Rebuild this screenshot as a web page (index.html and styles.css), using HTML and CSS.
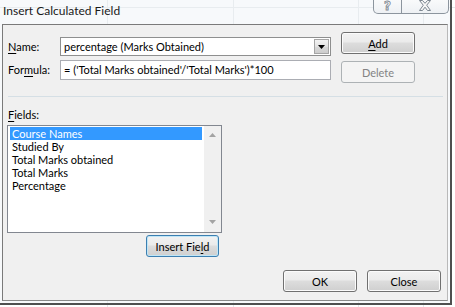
FILE: index.html
```html
<!DOCTYPE html>
<html lang="en">
<head>
    <meta charset="UTF-8">
    <title>Insert Calculated Field</title>
    <link rel="stylesheet" href="styles.css">
</head>
<body>

<div class="window">
    <div class="titlebar">
        <span class="title">Insert Calculated Field</span>
        <div class="caption">
            <span class="cap-btn cap-help">?</span>
            <span class="cap-btn cap-close">
                <svg width="14" height="11" viewBox="0 0 14 11">
                    <path d="M1.5 0.5 L4.5 0.5 L7 3.3 L9.5 0.5 L12.5 0.5 L8.7 5.2 L12.5 10.5 L9.5 10.5 L7 7.2 L4.5 10.5 L1.5 10.5 L5.3 5.2 Z" fill="#f7f7f7" stroke="#7d8791" stroke-width="1"/>
                </svg>
            </span>
        </div>
    </div>

    <div class="client">
        <div class="top">
            <div class="form">
                <div class="row">
                    <label class="lbl"><u>N</u>ame:</label>
                    <div class="combo">
                        <span class="value">percentage (Marks Obtained)</span>
                        <span class="drop">
                            <svg width="7" height="4" viewBox="0 0 7 4"><path d="M0 0 L7 0 L3.5 4 Z" fill="#000"/></svg>
                        </span>
                    </div>
                </div>
                <div class="row">
                    <label class="lbl">For<u>m</u>ula:</label>
                    <div class="textbox">= ('Total Marks obtained'/'Total Marks')*100</div>
                </div>
            </div>
            <div class="side">
                <button class="btn"><u>A</u>dd</button>
                <button class="btn" disabled>Delete</button>
            </div>
        </div>

        <div class="sep"></div>

        <div class="lbl fields-lbl"><u>F</u>ields:</div>
        <div class="listbox">
            <ul class="items">
                <li class="selected">Course Names</li>
                <li>Studied By</li>
                <li>Total Marks obtained</li>
                <li>Total Marks</li>
                <li>Percentage</li>
            </ul>
            <div class="scroll">
                <svg width="7" height="4" viewBox="0 0 7 4"><path d="M0 4 L7 4 L3.5 0 Z" fill="#a3a3a3"/></svg>
                <svg width="7" height="4" viewBox="0 0 7 4"><path d="M0 0 L7 0 L3.5 4 Z" fill="#a3a3a3"/></svg>
            </div>
        </div>
        <button class="btn focus insert">Insert Fie<u>l</u>d</button>

        <div class="actions">
            <button class="btn">OK</button>
            <button class="btn">Close</button>
        </div>
    </div>
</div>

</body>
</html>
```

FILE: styles.css
```css
/* Fondo: hoja de cálculo detrás del cuadro de diálogo */
body {
    margin: 0;
    width: 455px;
    height: 307px;
    overflow: hidden;
    font-family: "Segoe UI", Lato, "Noto Sans", sans-serif;
    font-size: 12px;
    color: #000;
    background-color: #ffffff;
    background-image:
        linear-gradient(#e4e7ea, #e4e7ea),
        linear-gradient(#e4e7ea, #e4e7ea),
        linear-gradient(#e4e7ea, #e4e7ea),
        linear-gradient(#e4e7ea, #e4e7ea),
        linear-gradient(#e4e7ea, #e4e7ea);
    background-size: 1px 100%, 1px 100%, 1px 100%, 1px 100%, 100% 1px;
    background-position: 107px 0, 233px 0, 358px 0, 423px 0, 0 7px;
    background-repeat: no-repeat;
}

.window {
    width: 450px;
    background: rgba(238, 242, 246, 0.45);
    border-right: 2px solid #4f4f4f;
    border-bottom: 2px solid #4f4f4f;
    padding-bottom: 2px;
}

/* Barra de título */
.titlebar {
    height: 24px;
    display: flex;
    justify-content: space-between;
    align-items: flex-start;
}
.title {
    padding: 3px 0 0 3px;
    line-height: 16px;
    color: #1a1a1a;
}
.caption {
    display: flex;
    margin-right: 1px;
    border: 1px solid #8c959e;
    border-top: none;
    border-radius: 0 0 5px 5px;
    background: linear-gradient(#f9fafb, #eef1f4);
    overflow: hidden;
}
.cap-btn {
    height: 13px;
    display: flex;
    justify-content: center;
    align-items: flex-start;
}
.cap-help {
    width: 27px;
    border-right: 1px solid #8c959e;
    font-family: "DejaVu Sans", sans-serif;
    font-weight: bold;
    font-size: 12px;
    line-height: 12px;
    color: #fafafa;
    -webkit-text-stroke: 0.8px #7d8791;
}
.cap-close {
    width: 46px;
}

/* Área del cliente */
.client {
    margin-left: 2px;
    width: 439px;
    height: 268px;
    border: 1px solid #7a7a7a;
    border-right-color: #b9b9b9;
    border-bottom-color: #8a8a8a;
    background: #f0f0f0;
    padding: 7px 0 0 5px;
    font-size: 11px;
}

.top {
    display: flex;
}
.form {
    margin-top: 5px;
    display: flex;
    flex-direction: column;
    gap: 4px;
}
.row {
    display: flex;
    align-items: center;
}
.lbl {
    width: 52px;
    line-height: 16px;
}
.lbl u,
.btn u {
    text-decoration-thickness: 1px;
    text-underline-offset: 2px;
}
.combo,
.textbox {
    width: 266px;
    border: 1px solid #abadb3;
    background: #fff;
    padding-left: 3px;
    white-space: nowrap;
    overflow: hidden;
}
.combo {
    height: 17px;
    line-height: 17px;
    display: flex;
    justify-content: space-between;
    border-color: #8e8f8f;
}
.textbox {
    height: 18px;
    line-height: 18px;
}
.drop {
    width: 13px;
    height: 13px;
    margin: 1px 1px 0 0;
    border: 1px solid #a5a5a5;
    background: linear-gradient(#f3f3f3, #e2e2e2 50%, #d8d8d8 51%, #cdcdcd);
    display: flex;
    justify-content: center;
    align-items: center;
}

.side {
    margin-left: 10px;
    display: flex;
    flex-direction: column;
    gap: 7px;
}

/* Botones */
.btn {
    width: 74px;
    height: 22px;
    padding: 0;
    font-family: inherit;
    font-size: 11px;
    color: #000;
    border: 1px solid #707070;
    border-radius: 3px;
    background: linear-gradient(#f2f2f2 0%, #ebebeb 45%, #dddddd 50%, #cfcfcf 100%);
    box-shadow: inset 0 0 0 1px #fbfbfb;
}
.btn:disabled {
    color: #838383;
    border-color: #adb2b5;
    background: #f4f4f4;
    box-shadow: none;
}
.btn.focus {
    border-color: #3c7fb1;
    box-shadow: inset 0 0 0 1px #bfe6f7;
}

.sep {
    height: 1px;
    margin: 13px 4px 0 0;
    background: #d5dfe5;
}
.fields-lbl {
    margin-top: 10px;
    margin-bottom: 2px;
}

/* Lista de campos */
.listbox {
    width: 213px;
    height: 106px;
    margin-left: -1px;
    border: 1px solid #828790;
    background: #fff;
    display: flex;
    justify-content: space-between;
}
.items {
    list-style: none;
    margin: 1px 0 0 2px;
    padding: 0;
    width: 192px;
}
.items li {
    height: 13px;
    line-height: 13px;
    padding-left: 2px;
    white-space: nowrap;
}
.items li.selected {
    background: #3399ff;
    color: #fff;
}
.scroll {
    width: 17px;
    background: #f0f0f0;
    display: flex;
    flex-direction: column;
    justify-content: space-between;
    align-items: center;
    padding: 7px 0 8px;
    box-sizing: border-box;
}

.insert {
    display: block;
    margin: 2px 0 0 138px;
    width: 73px;
}

.actions {
    display: flex;
    justify-content: flex-end;
    gap: 10px;
    margin-top: 13px;
    padding-right: 6px;
}
```
